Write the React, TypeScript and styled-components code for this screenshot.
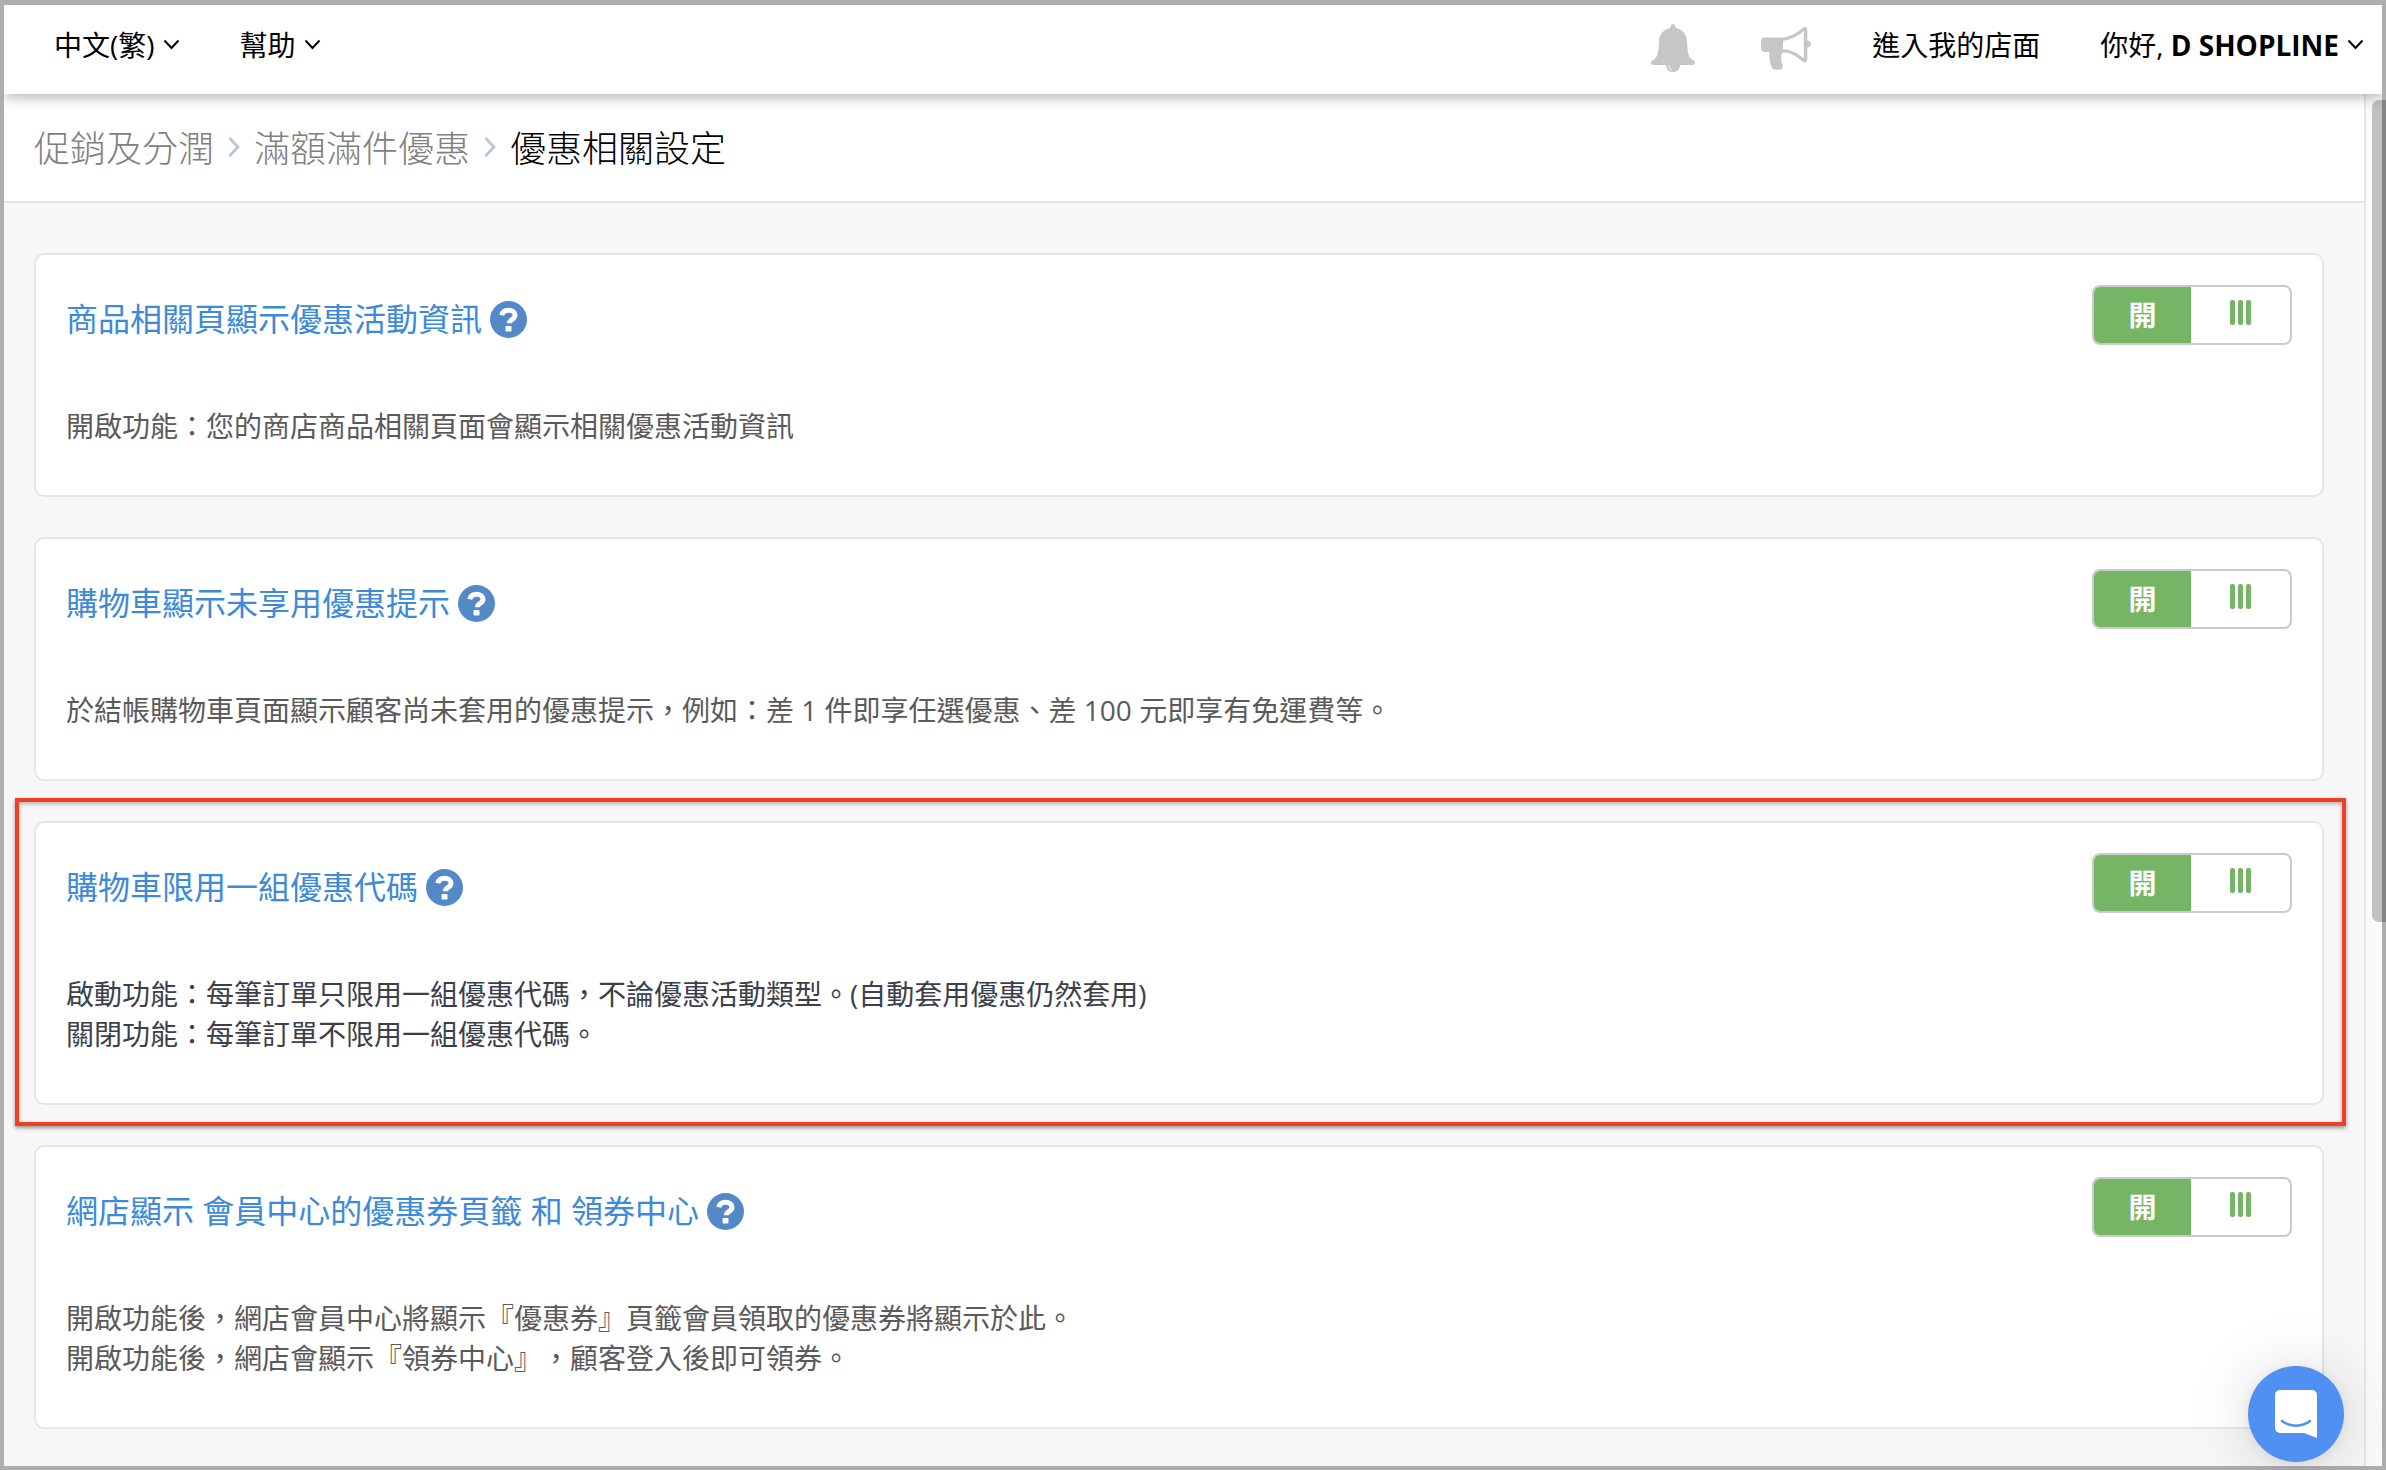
import React, { useState } from "react";
import styled, { createGlobalStyle } from "styled-components";

const GlobalStyle = createGlobalStyle`
  *, *::before, *::after { box-sizing: border-box; }
  html, body { margin: 0; height: 100%; overflow: hidden; }
  #root { height: 100%; }
  body, button {
    font-family: "Open Sans", "Noto Sans CJK TC", sans-serif;
    text-spacing-trim: space-all;
  }
  a { color: inherit; text-decoration: none; }
`;

const Frame = styled.div`
  display: flex;
  flex-direction: column;
  height: 100vh;
  border: 4px solid #aeaeae;
  border-top-width: 5px;
  overflow: hidden;
  background: #f7f7f7;
`;

const Header = styled.header`
  display: flex;
  justify-content: space-between;
  flex: none;
  height: 89px;
  padding: 20px 18px 0 50px;
  background: #fff;
  box-shadow: 0 2px 14px rgba(0, 0, 0, 0.34);
  z-index: 2;
`;

const Group = styled.nav`
  display: flex;
  align-items: flex-start;
  gap: 60px;
`;

const headerItem = `
  display: flex;
  align-items: center;
  gap: 8px;
  height: 40px;
  padding: 0;
  border: 0;
  background: none;
  color: #000;
  font-size: 28px;
  line-height: 40px;
  white-space: pre;
`;

const MenuButton = styled.button`
  ${headerItem}
`;

const HeaderLink = styled.a`
  ${headerItem}
`;

const IconButton = styled.button`
  display: flex;
  align-items: center;
  height: 46px;
  padding: 0;
  border: 0;
  background: none;
`;

const Body = styled.div`
  display: flex;
  flex: 1;
  min-height: 0;
`;

const Main = styled.main`
  flex: 1;
  min-width: 0;
  overflow: hidden;
`;

const Breadcrumb = styled.nav`
  display: flex;
  align-items: center;
  gap: 14px;
  height: 109px;
  padding: 0 30px 2px;
  border-bottom: 2px solid #e6e6e6;
  background: #fff;
  font-size: 36px;
  font-weight: 300;
  color: #808080;
`;

const Current = styled.span`
  color: #000;
`;

const Cards = styled.div`
  display: flex;
  flex-direction: column;
  gap: 40px;
  padding: 50px 40px 36px 30px;
`;

const Card = styled.section`
  position: relative;
  padding: 30px 30px 49px;
  border: 2px solid #e6e6e6;
  border-radius: 10px;
  background: #fff;
`;

const Highlight = styled.div`
  position: absolute;
  inset: -25px -24px -23px -21px;
  border: 4px solid #ee4023;
  box-shadow: 0 2px 4px rgba(0, 0, 0, 0.4), inset 0 2px 4px rgba(0, 0, 0, 0.3);
  pointer-events: none;
`;

const CardHead = styled.div`
  display: flex;
  justify-content: space-between;
  align-items: flex-start;
  height: 121px;
`;

const Title = styled.h2`
  display: flex;
  align-items: center;
  gap: 8px;
  margin: 10px 0 0;
  color: #3c8ad8;
  font-size: 32px;
  font-weight: 400;
  line-height: 48px;
`;

const Switch = styled.button`
  display: flex;
  width: 200px;
  height: 60px;
  padding: 0;
  border: 2px solid #cacaca;
  border-radius: 8px;
  overflow: hidden;
  background: #fff;
`;

const OnSide = styled.span`
  flex: 0 0 97px;
  height: 100%;
  background: #76b566;
  color: #fff;
  font-size: 28px;
  font-weight: 700;
  line-height: 56px;
  text-align: center;
`;

const Grip = styled.span`
  display: flex;
  flex: 1;
  justify-content: center;
  gap: 3px;
  padding-top: 13px;

  i {
    width: 5px;
    height: 25px;
    border-radius: 2px;
    background: #76b566;
  }
`;

const Text = styled.p<{ $color: string }>`
  margin: 0;
  color: ${(p) => p.$color};
  font-size: 28px;
  line-height: 40px;
`;

const ScrollTrack = styled.div`
  position: relative;
  flex: 0 0 18px;
  border-left: 2px solid #e6e6e6;
  background: #fafafa;
`;

const ScrollThumb = styled.div`
  position: absolute;
  top: 6px;
  right: -4px;
  width: 14px;
  height: 822px;
  border-radius: 7px 0 0 7px;
  background: #c1c1c1;
`;

const ScrollEdge = styled.div`
  position: fixed;
  top: 100px;
  right: 0;
  width: 4px;
  height: 822px;
  background: #858585;
`;

const Chat = styled.button`
  position: fixed;
  right: 42px;
  bottom: 8px;
  width: 96px;
  height: 96px;
  padding: 0;
  border: 0;
  border-radius: 50%;
  background: #5090f3;
  box-shadow: 0 2px 12px rgba(0, 0, 0, 0.08), 0 4px 64px rgba(0, 0, 0, 0.16);
  z-index: 3;

  svg { display: block; margin: 0 auto; }
`;

const Caret = () => (
  <svg width="17" height="12" viewBox="0 0 17 12" fill="none" stroke="#000" strokeWidth="2" aria-hidden="true">
    <path d="M1.5 1.5 8.5 9l7-7.5" />
  </svg>
);

const Separator = () => (
  <svg width="12" height="20" viewBox="0 0 12 20" fill="none" stroke="#b8c3d6" strokeWidth="2.6" aria-hidden="true">
    <path d="m1.5 1 8.5 9-8.5 9" />
  </svg>
);

const Bell = () => (
  <svg width="50" height="48" viewBox="0 0 50 48" aria-hidden="true">
    <path
      fill="#c6c6c6"
      d="M23 0c1.700 0 2.500 2.200 2.700 4.100C32 5.300 36.500 10 37 17c.4 7 .4 12 3 16.500 1.800 2.800 5 3.200 5 5.200 0 1.600-1.200 2.300-2.700 2.300H30c-.2 4.400-3 7-7 7s-6.800-2.600-7-7H3.700C2.200 41 1 40.300 1 38.700c0-2 3.200-2.400 5-5.200C8.600 29 8.600 24 9 17c.5-7 5-11.700 11.300-12.900C20.500 2.200 21.300 0 23 0Z"
    />
    <path d="M19 41.500c.2 2.500 1.200 4 3.200 4.500" fill="none" stroke="#fff" strokeWidth="1" />
  </svg>
);

const Megaphone = () => (
  <svg width="52" height="46" viewBox="0 0 52 46" aria-hidden="true">
    <path
      fill="#c6c6c6"
      fillRule="evenodd"
      d="M5 12.500h17C30 12 37 8 42.500 3c2-1.800 4.800-.8 4.800 1.700V15.500c2.400.4 3.700 1.700 3.700 3.500s-1.300 3.100-3.700 3.500v12.300c0 2.500-2.800 3.500-4.800 1.700C37 31.500 30 27.500 24 27.500c-1.500 0-2.800 1.300-2.500 3 .3 1.200-.5 2-.2 3.200.4 1.400-.2 2.300.3 3.600.3 1.300 1.200 1.700.8 3 .9.900.4 3.200-1.400 3.900-2.600 1-6.400 1-8-.2-2.500-2-3.800-10.500-3.600-17H5c-2.400 0-4-1.600-4-4v-6.500c0-2.400 1.600-4 4-4Zm18 3.300v8.400c8 .3 15 4 20.800 9.300V5.800C38 11 31 15 23 15.800Z"
    />
  </svg>
);

const Help = () => (
  <svg width="37" height="37" viewBox="0 0 37 37" role="img" aria-label="說明">
    <circle cx="18.500" cy="18.500" r="18.500" fill="#5489c7" />
    <path d="M11.800 14.200c.8-3.400 3.200-5 6.700-5 4 0 6.500 2.200 6.500 5 0 4.300-5.700 4.300-5.700 8" fill="none" stroke="#fff" strokeWidth="5" />
    <rect x="15.500" y="25" width="6" height="5.500" rx="1" fill="#fff" />
  </svg>
);

const ChatIcon = () => (
  <svg width="42" height="48" viewBox="0 0 42 48" aria-hidden="true">
    <path fill="#fff" d="M5 0h32a5 5 0 0 1 5 5v43l-13-5H5a5 5 0 0 1-5-5V5a5 5 0 0 1 5-5Z" />
    <path d="M7 31c8 6.200 20 6.200 28 0" fill="none" stroke="#5090f3" strokeWidth="2.500" strokeLinecap="round" />
  </svg>
);

type Setting = { title: string; lines: string[]; color: string; highlighted?: boolean };

const settings: Setting[] = [
  {
    title: "商品相關頁顯示優惠活動資訊",
    lines: ["開啟功能：您的商店商品相關頁面會顯示相關優惠活動資訊"],
    color: "#5a5a5a",
  },
  {
    title: "購物車顯示未享用優惠提示",
    lines: ["於結帳購物車頁面顯示顧客尚未套用的優惠提示，例如：差 1 件即享任選優惠、差 100 元即享有免運費等。"],
    color: "#5a5a5a",
  },
  {
    title: "購物車限用一組優惠代碼",
    lines: [
      "啟動功能：每筆訂單只限用一組優惠代碼，不論優惠活動類型。(自動套用優惠仍然套用)",
      "關閉功能：每筆訂單不限用一組優惠代碼。",
    ],
    color: "#3b3f4a",
    highlighted: true,
  },
  {
    title: "網店顯示 會員中心的優惠券頁籤 和 領券中心",
    lines: [
      "開啟功能後，網店會員中心將顯示『優惠券』頁籤會員領取的優惠券將顯示於此。",
      "開啟功能後，網店會顯示『領券中心』，顧客登入後即可領券。",
    ],
    color: "#5a5a5a",
  },
];

function SettingCard({ title, lines, color, highlighted }: Setting) {
  const [on, setOn] = useState(true);
  return (
    <Card>
      <CardHead>
        <Title>
          {title}
          <Help />
        </Title>
        <Switch type="button" role="switch" aria-checked={on} aria-label={title} onClick={() => setOn(!on)}>
          <OnSide>開</OnSide>
          <Grip>
            <i />
            <i />
            <i />
          </Grip>
        </Switch>
      </CardHead>
      {lines.map((line) => (
        <Text key={line} $color={color}>
          {line}
        </Text>
      ))}
      {highlighted && <Highlight />}
    </Card>
  );
}

export default function App() {
  return (
    <Frame lang="zh-Hant">
      <GlobalStyle />
      <Header>
        <Group>
          <MenuButton type="button">
            中文(繁)
            <Caret />
          </MenuButton>
          <MenuButton type="button">
            幫助
            <Caret />
          </MenuButton>
        </Group>
        <Group>
          <IconButton type="button" aria-label="通知">
            <Bell />
          </IconButton>
          <IconButton type="button" aria-label="公告">
            <Megaphone />
          </IconButton>
          <HeaderLink href="#store">進入我的店面</HeaderLink>
          <MenuButton type="button">
            <span>
              你好, <b>D SHOPLINE</b>
            </span>
            <Caret />
          </MenuButton>
        </Group>
      </Header>
      <Body>
        <Main>
          <Breadcrumb aria-label="路徑">
            <a href="#promotions">促銷及分潤</a>
            <Separator />
            <a href="#offers">滿額滿件優惠</a>
            <Separator />
            <Current aria-current="page">優惠相關設定</Current>
          </Breadcrumb>
          <Cards>
            {settings.map((s) => (
              <SettingCard key={s.title} {...s} />
            ))}
          </Cards>
        </Main>
        <ScrollTrack>
          <ScrollThumb />
        </ScrollTrack>
      </Body>
      <ScrollEdge />
      <Chat type="button" aria-label="聊天">
        <ChatIcon />
      </Chat>
    </Frame>
  );
}
